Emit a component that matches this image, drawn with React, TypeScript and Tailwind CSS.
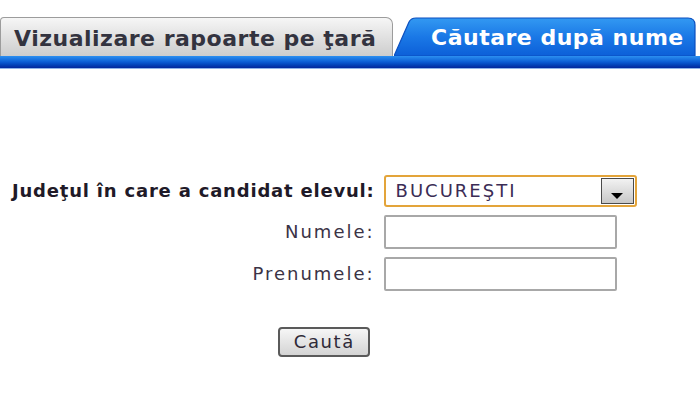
import React from "react";

const labelCls =
  "justify-self-end text-[18px] tracking-[2px] text-[#3b3346] leading-none";
const inputCls =
  "justify-self-start w-[233px] h-[34px] border-2 border-[#a8a8a8] bg-white rounded-[2px]";

export default function App() {
  return (
    <div className="w-[700px] h-[420px] bg-white overflow-hidden font-['DejaVu_Sans','Liberation_Sans',sans-serif]">
      {/* tabs */}
      <div className="pt-[17px] flex items-end">
        <div className="w-[393px] h-[39px] flex items-center pl-[13px] pt-[2px] border border-b-0 border-[#9c9c9c] rounded-tl-[4px] rounded-tr-[7px] bg-gradient-to-b from-[#f6f6f6] to-[#cdcdcd] text-[22px] font-bold tracking-[0.5px] text-[#33333f] whitespace-nowrap">
          Vizualizare rapoarte pe ţară
        </div>
        <div className="relative w-[302px] h-[39px] ml-[1px]">
          <svg
            className="absolute inset-0"
            width="302"
            height="39"
            viewBox="0 0 302 39"
          >
            <defs>
              <linearGradient id="tabBlue" x1="0" y1="0" x2="0" y2="1">
                <stop offset="0" stopColor="#3399f2" />
                <stop offset="0.5" stopColor="#1a78e6" />
                <stop offset="1" stopColor="#0c5fd8" />
              </linearGradient>
            </defs>
            <path
              d="M0 39 L15 5 Q17 1 22 1 L294 1 Q301 1 301 8 L301 39 Z"
              fill="url(#tabBlue)"
              stroke="#0b4fbf"
              strokeWidth="1.2"
            />
          </svg>
          <div className="relative h-full flex items-center pl-[37px] pt-[2px] text-[22px] font-bold tracking-[0.5px] text-white whitespace-nowrap">
            Căutare după nume
          </div>
        </div>
      </div>
      <div className="h-[13px] bg-gradient-to-b from-[#2c8ff0] via-[#0b5cd4] to-[#03269c] border-b border-[#8fb4e8]" />

      {/* form */}
      <div className="mt-[106px] ml-[12px] w-fit grid grid-cols-[max-content_auto] gap-x-[9px] gap-y-[8px] items-center">
        <div className="justify-self-end text-[18px] font-bold tracking-[0.8px] text-[#1f1a28] leading-none">
          Judeţul în care a candidat elevul:
        </div>
        <div className="w-[253px] h-[32px] border-2 border-[#e3a43a] rounded-[3px] bg-white flex items-center justify-between pl-[10px] pr-[1px]">
          <span className="text-[18px] tracking-[2px] text-[#3b2c55] leading-none">
            BUCUREŞTI
          </span>
          <div className="w-[33px] h-[26px] border border-[#4a4a4a] bg-gradient-to-b from-[#f2f2f2] to-[#c8c8c8] flex items-end justify-center pb-[4px]">
            <div className="w-0 h-0 border-l-[6px] border-r-[6px] border-t-[6px] border-l-transparent border-r-transparent border-t-black" />
          </div>
        </div>

        <div className={labelCls}>Numele:</div>
        <div className={inputCls} />

        <div className={labelCls}>Prenumele:</div>
        <div className={inputCls} />

        <div className="col-span-2 justify-self-center mt-[28px]">
          <button className="w-[92px] h-[30px] border-2 border-[#5a5a5a] rounded-[4px] bg-gradient-to-b from-[#f6f6f6] to-[#d4d4d4] text-[18px] tracking-[1.6px] text-[#2f2a38] leading-none">
            Caută
          </button>
        </div>
      </div>
    </div>
  );
}
